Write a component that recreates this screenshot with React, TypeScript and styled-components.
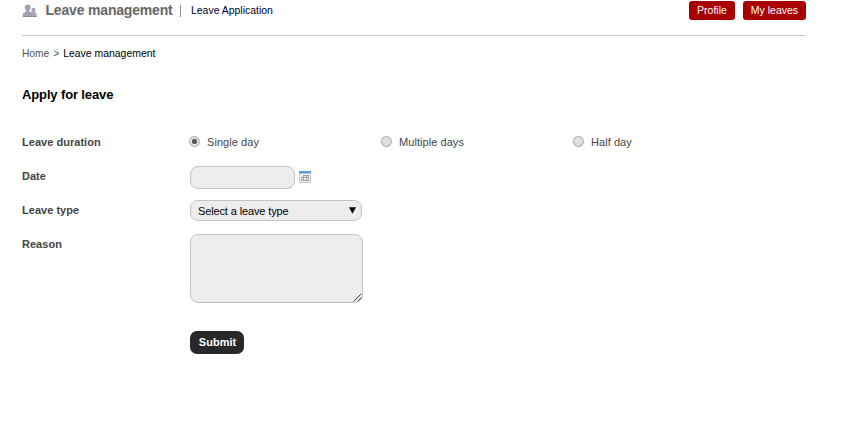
import React from "react";
import styled, { createGlobalStyle } from "styled-components";

const GlobalStyle = createGlobalStyle`
  * { box-sizing: border-box; }
  body {
    margin: 0;
    background: #fff;
    color: #444;
    font: 11px/14px "Liberation Sans", Arial, sans-serif;
  }
`;

const Page = styled.main`
  width: 784px;
  margin-left: 22px;
`;

const Header = styled.header`
  display: flex;
  height: 36px;
  border-bottom: 1px solid #ccc;
`;

const Brand = styled.div`
  display: flex;
  align-items: center;
  height: 21px;
`;

const Title = styled.h1`
  width: 134px;
  margin: 0 0 1px 8.5px;
  font-size: 14px;
  line-height: 20px;
  letter-spacing: -0.18px;
  color: #666;
`;

const Divider = styled.span`
  width: 1px;
  height: 12px;
  margin: 1px 10px 0 0.5px;
  background: #8a9484;
`;

const Section = styled.span`
  padding-top: 1px;
  font-size: 10.45px;
  color: #003;
`;

const Actions = styled.nav`
  display: flex;
  gap: 8px;
  margin: 1px 0 0 auto;
`;

const ActionButton = styled.button<{ $width: number }>`
  width: ${(p) => p.$width}px;
  height: 19px;
  padding: 0;
  border: 0;
  border-radius: 3px;
  background: #a80000;
  color: #fff;
  font: 10.5px/19px "Liberation Sans", Arial, sans-serif;
  white-space: nowrap;
`;

const Breadcrumb = styled.nav`
  display: flex;
  gap: 4px;
  margin-top: 11px;
  font-size: 10.2px;
  color: #555;
`;

const Current = styled.span`
  font-size: 10.45px;
  color: #000;
`;

const Heading = styled.h2`
  margin: 25px 0 0;
  font-size: 13px;
  line-height: 18px;
  letter-spacing: -0.13px;
  color: #000;
`;

const Form = styled.form`
  display: flex;
  flex-direction: column;
  margin-top: 28px;
`;

const Row = styled.div<{ $height: number }>`
  display: grid;
  grid-template-columns: 168px 1fr;
  align-items: start;
  height: ${(p) => p.$height}px;
`;

const Label = styled.label`
  padding-top: 3px;
  font-weight: bold;
  letter-spacing: 0.03px;
`;

const RadioGroup = styled.div`
  display: grid;
  grid-template-columns: repeat(3, 192px);
  padding-top: 3px;
`;

const Option = styled.label`
  display: flex;
  align-items: center;
  gap: 7px;
  margin-left: -1px;
  letter-spacing: 0.06px;
`;

const Radio = styled.input`
  appearance: none;
  width: 11px;
  height: 11px;
  margin: 0 0 1px;
  border: 1px solid #a6a6a6;
  border-radius: 50%;
  background: linear-gradient(#e4e4e4, #d9d9d9);
  &:checked {
    background: radial-gradient(circle, #5b5b5b 0 2.3px, #e2e2e2 3px);
  }
`;

const DateField = styled.div`
  display: flex;
  gap: 4px;
`;

const DateInput = styled.input`
  width: 105px;
  height: 23px;
  padding: 0 8px;
  border: 1px solid #c3c3c3;
  border-radius: 8px;
  background: #ededed;
`;

const CalendarIcon = styled.svg`
  width: 12px;
  height: 12px;
  margin-top: 5px;
`;

const SelectBox = styled.div`
  display: flex;
  justify-content: space-between;
  align-items: center;
  width: 172px;
  height: 21px;
  padding: 1px 5px 0 7px;
  border: 1px solid #c3c3c3;
  border-radius: 8px;
  background: #ededed;
  color: #000;
  letter-spacing: -0.13px;
`;

const Arrow = styled.svg`
  width: 7px;
  height: 7px;
  margin-bottom: 2px;
`;

const ReasonBox = styled.div`
  display: flex;
  width: 173px;
  height: 69px;
  border: 1px solid #c3c3c3;
  border-radius: 8px;
  background: #ededed;
`;

const Grip = styled.svg`
  flex: none;
  width: 9px;
  height: 9px;
  margin: auto 0 0 auto;
  overflow: visible;
`;

const Submit = styled.button`
  width: 54px;
  height: 23px;
  margin-left: 168px;
  padding: 0 0 0 1px;
  border: 0;
  border-radius: 7px;
  background: #26282a;
  color: #fff;
  font: bold 11px/23px "Liberation Sans", Arial, sans-serif;
`;

function PeopleIcon() {
  return (
    <svg width="15" height="14" viewBox="0 0 15 14">
      <path d="M10.5 3.9c3-.6 3.7 2.1 2.5 4.4l1.6 1.3v3.1H8.8V8.6l1-.7c-.9-1.6-.6-3.3.7-4Z" fill="#a5a9b5" />
      <path d="M5.8.4c3.5 0 3.7 3.6 1.6 6v1l2.8 1.4v3.9H.8V9.6l3.2-2.1v-1C1.9 4.2 2.2.4 5.8.4Z" fill="#a0a4b1" />
      <path d="M1 12.5h8.9M10.7 12.5h3.8" stroke="#858a99" />
    </svg>
  );
}

const durations = ["Single day", "Multiple days", "Half day"];

export default function App() {
  return (
    <>
      <GlobalStyle />
      <Page>
        <Header>
          <Brand>
            <PeopleIcon />
            <Title>Leave management</Title>
            <Divider />
            <Section>Leave Application</Section>
          </Brand>
          <Actions>
            <ActionButton $width={46}>Profile</ActionButton>
            <ActionButton $width={63}>My leaves</ActionButton>
          </Actions>
        </Header>
        <Breadcrumb>
          <span>Home</span>
          <span>&gt;</span>
          <Current>Leave management</Current>
        </Breadcrumb>
        <Heading>Apply for leave</Heading>
        <Form>
          <Row $height={34}>
            <Label>Leave duration</Label>
            <RadioGroup>
              {durations.map((name, i) => (
                <Option key={name}>
                  <Radio type="radio" name="duration" defaultChecked={i === 0} />
                  {name}
                </Option>
              ))}
            </RadioGroup>
          </Row>
          <Row $height={34}>
            <Label>Date</Label>
            <DateField>
              <DateInput aria-label="Date" />
              <CalendarIcon viewBox="0 0 12 12" shapeRendering="crispEdges">
                <path fill="#c4c4c4" d="M0 0h12v12H0z" />
                <path fill="#f2f2f2" d="M1 3h10v8H1z" />
                <path fill="#5d9ade" d="M0 0h12v2H0z" />
                <path fill="#a5c9f0" d="M0 2h12v1H0z" />
                <path fill="#a3a3a3" d="M4 4h6v1H4zM2 6h8v1H2zM2 9h8v1H2zM2 6h1v4H2zM4 4h1v6H4zM7 4h1v6H7zM9 4h1v6H9z" />
              </CalendarIcon>
            </DateField>
          </Row>
          <Row $height={34}>
            <Label>Leave type</Label>
            <SelectBox role="combobox">
              Select a leave type
              <Arrow viewBox="0 0 7 7">
                <path d="M0 .3h7L3.5 6.7Z" />
              </Arrow>
            </SelectBox>
          </Row>
          <Row $height={97}>
            <Label>Reason</Label>
            <ReasonBox role="textbox">
              <Grip viewBox="0 0 9 9">
                <path d="M.5 8.5l8-8M4.5 8.5l4-4" fill="none" stroke="#444" />
              </Grip>
            </ReasonBox>
          </Row>
          <Submit type="button">Submit</Submit>
        </Form>
      </Page>
    </>
  );
}
